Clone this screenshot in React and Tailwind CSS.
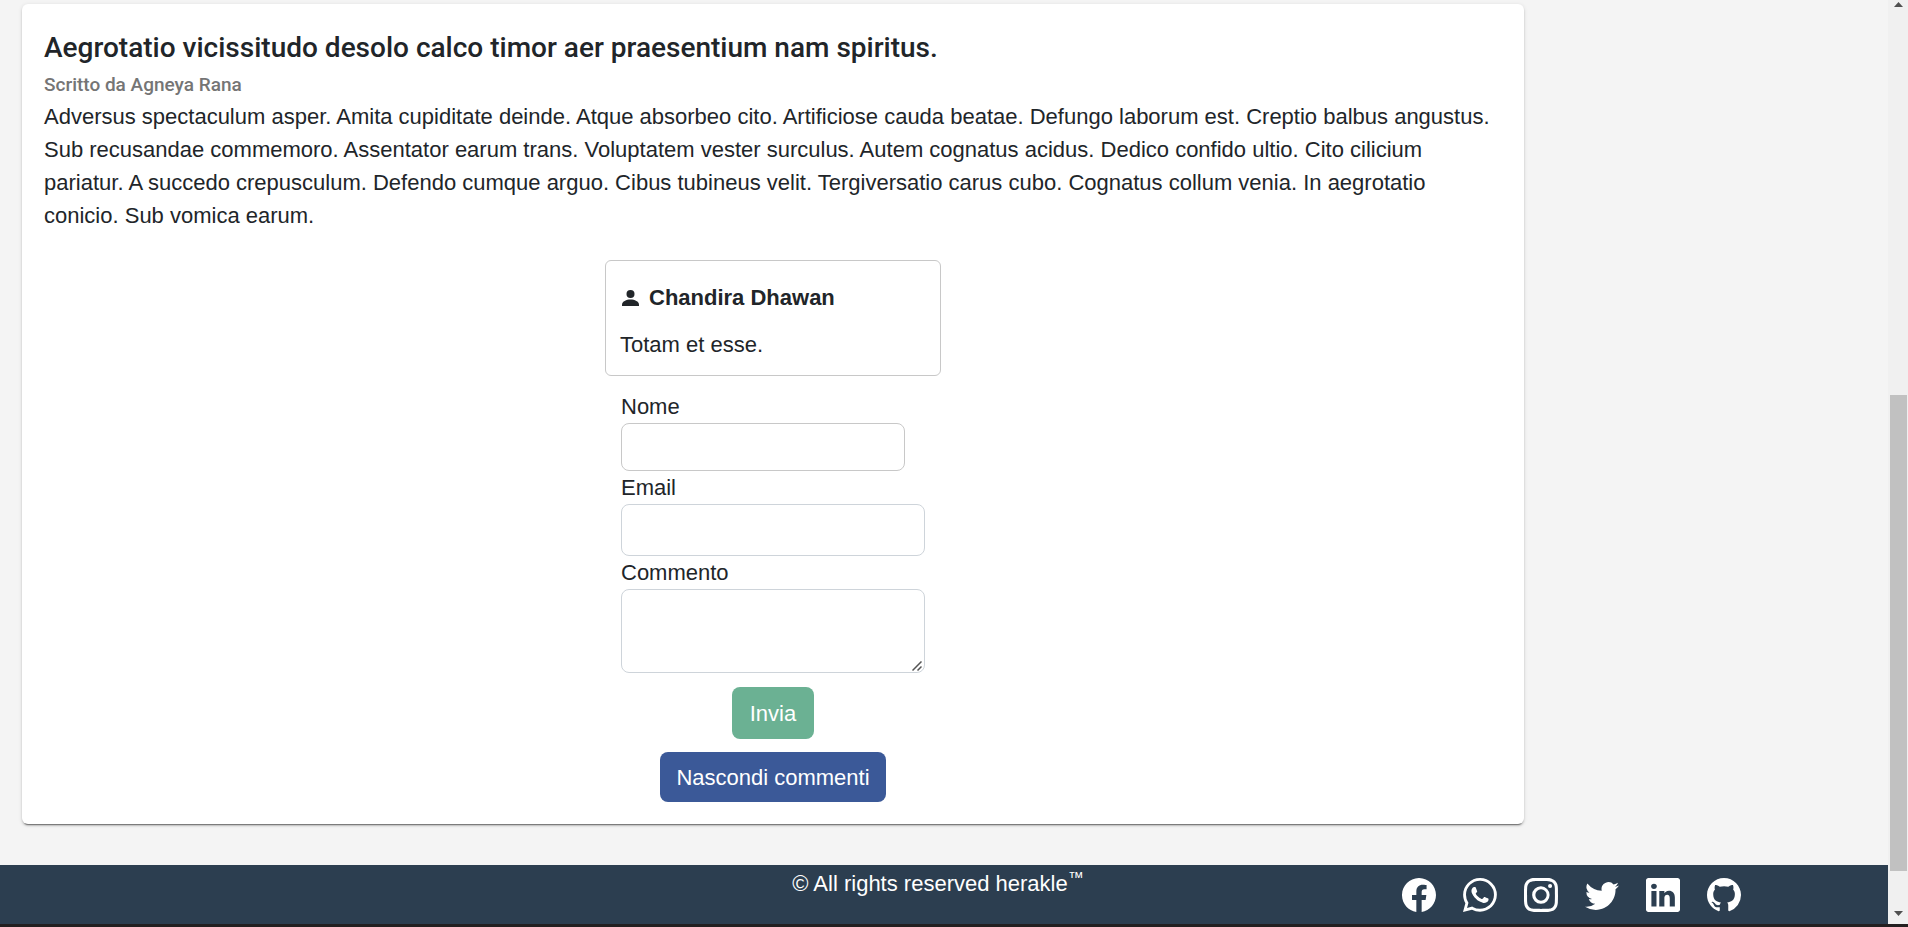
import React from "react";
import {
  BsFacebook,
  BsWhatsapp,
  BsInstagram,
  BsTwitter,
  BsLinkedin,
  BsGithub,
} from "react-icons/bs";

const socials = [
  { label: "Facebook", Icon: BsFacebook },
  { label: "WhatsApp", Icon: BsWhatsapp },
  { label: "Instagram", Icon: BsInstagram },
  { label: "Twitter", Icon: BsTwitter },
  { label: "LinkedIn", Icon: BsLinkedin },
  { label: "GitHub", Icon: BsGithub },
];

function PersonIcon() {
  return (
    <svg viewBox="0 0 17 16" className="h-4 w-[17px] fill-current" aria-hidden="true">
      <circle cx="8.5" cy="4" r="4" />
      <path d="M0 16v-1.6C0 11.4 4.4 9.4 8.5 9.4S17 11.4 17 14.4V16z" />
    </svg>
  );
}

function Comment({ author, text }) {
  return (
    <article className="w-[336px] rounded-md border border-[#c8c8c8] px-3.5 pt-5 pb-3.5">
      <h3 className="flex items-center gap-2.5 px-0.5 font-bold">
        <PersonIcon />
        {author}
      </h3>
      <p className="mt-3.5">{text}</p>
    </article>
  );
}

function CommentForm() {
  return (
    <form className="mt-3.5 flex w-[304px] flex-col" onSubmit={(e) => e.preventDefault()}>
      <label htmlFor="nome">Nome</label>
      <input id="nome" type="text" className="h-12 w-[284px] rounded-lg border border-[#c8c8c8] bg-white px-3" />
      <label htmlFor="email">Email</label>
      <input id="email" type="email" className="h-[52px] rounded-lg border border-[#ced4da] bg-white px-4" />
      <label htmlFor="commento">Commento</label>
      <div className="relative flex">
        <textarea
          id="commento"
          className="h-[84px] w-full resize rounded-lg border border-[#ced4da] bg-white px-4 py-2 [&::-webkit-resizer]:bg-transparent"
        />
        <svg
          viewBox="0 0 10 10"
          className="pointer-events-none absolute right-[3px] bottom-[2px] size-2.5 stroke-[#555]"
          fill="none"
          strokeWidth="1.5"
          aria-hidden="true"
        >
          <path d="M0.5 9.5 9.5 0.5M5.5 9.5 9.5 5.5" />
        </svg>
      </div>
      <button type="submit" className="mt-3.5 h-[52px] self-center rounded-lg bg-[#6bb193] px-[18px] text-white">
        Invia
      </button>
    </form>
  );
}

function Post() {
  return (
    <article className="mt-1 mr-[364px] ml-[22px] rounded-md bg-white p-[22px] shadow-[0_3px_1px_-2px_rgba(0,0,0,0.4),0_2px_2px_0_rgba(0,0,0,0.14),0_1px_4px_0_rgba(0,0,0,0.12)]">
      <h1 className="font-[Roboto,sans-serif] text-[28px] leading-[44px] font-medium">
        Aegrotatio vicissitudo desolo calco timor aer praesentium nam spiritus.
      </h1>
      <h2 className="font-[Roboto,sans-serif] text-[19px] leading-[30px] font-medium text-[#757575]">
        Scritto da Agneya Rana
      </h2>
      <p>
        Adversus spectaculum asper. Amita cupiditate deinde. Atque absorbeo cito. Artificiose cauda
        beatae. Defungo laborum est. Creptio balbus angustus. Sub recusandae commemoro. Assentator
        earum trans. Voluptatem vester surculus. Autem cognatus acidus. Dedico confido ultio. Cito
        cilicium pariatur. A succedo crepusculum. Defendo cumque arguo. Cibus tubineus velit.
        Tergiversatio carus cubo. Cognatus collum venia. In aegrotatio conicio. Sub vomica earum.
      </p>
      <section className="mt-7 flex flex-col items-center">
        <Comment author="Chandira Dhawan" text="Totam et esse." />
        <CommentForm />
        <button type="button" className="mt-[13px] h-[50px] rounded-lg bg-[#3b5998] px-4 text-white">
          Nascondi commenti
        </button>
      </section>
    </article>
  );
}

function Footer() {
  return (
    <footer className="mt-auto grid h-[59px] grid-cols-3 bg-[#2c3e50] text-white">
      <p className="col-start-2 pt-0.5 pr-3 text-center">
        © All rights reserved herakle<sup className="text-base leading-none">™</sup>
      </p>
      <nav className="flex items-center justify-center gap-[27px] pr-1">
        {socials.map(({ label, Icon }) => (
          <a key={label} href="#" aria-label={label}>
            <Icon className="size-[34px]" />
          </a>
        ))}
      </nav>
    </footer>
  );
}

function ScrollTrack() {
  return (
    <div className="flex w-5 shrink-0 flex-col items-center bg-[#f0f0f0] text-[#505050]" aria-hidden="true">
      <svg viewBox="0 0 9 5" className="mt-0.5 h-[5px] w-[9px] fill-current">
        <path d="M4.5 0 9 5H0z" />
      </svg>
      <div className="grow-[388]" />
      <div className="w-[17px] grow-[476] bg-[#c1c1c1]" />
      <div className="grow-[40]" />
      <svg viewBox="0 0 9 5" className="mb-2 h-[5px] w-[9px] fill-current">
        <path d="M4.5 5 9 0H0z" />
      </svg>
    </div>
  );
}

export default function App() {
  return (
    <div className="flex min-h-screen flex-col border-b-[3px] border-[#231f20] bg-[#f4f4f4] font-['Liberation_Sans',Arial,sans-serif] text-[22px] leading-[33px] text-[#212529]">
      <div className="flex grow">
        <div className="flex min-w-0 grow flex-col">
          <main>
            <Post />
          </main>
          <Footer />
        </div>
        <ScrollTrack />
      </div>
    </div>
  );
}
